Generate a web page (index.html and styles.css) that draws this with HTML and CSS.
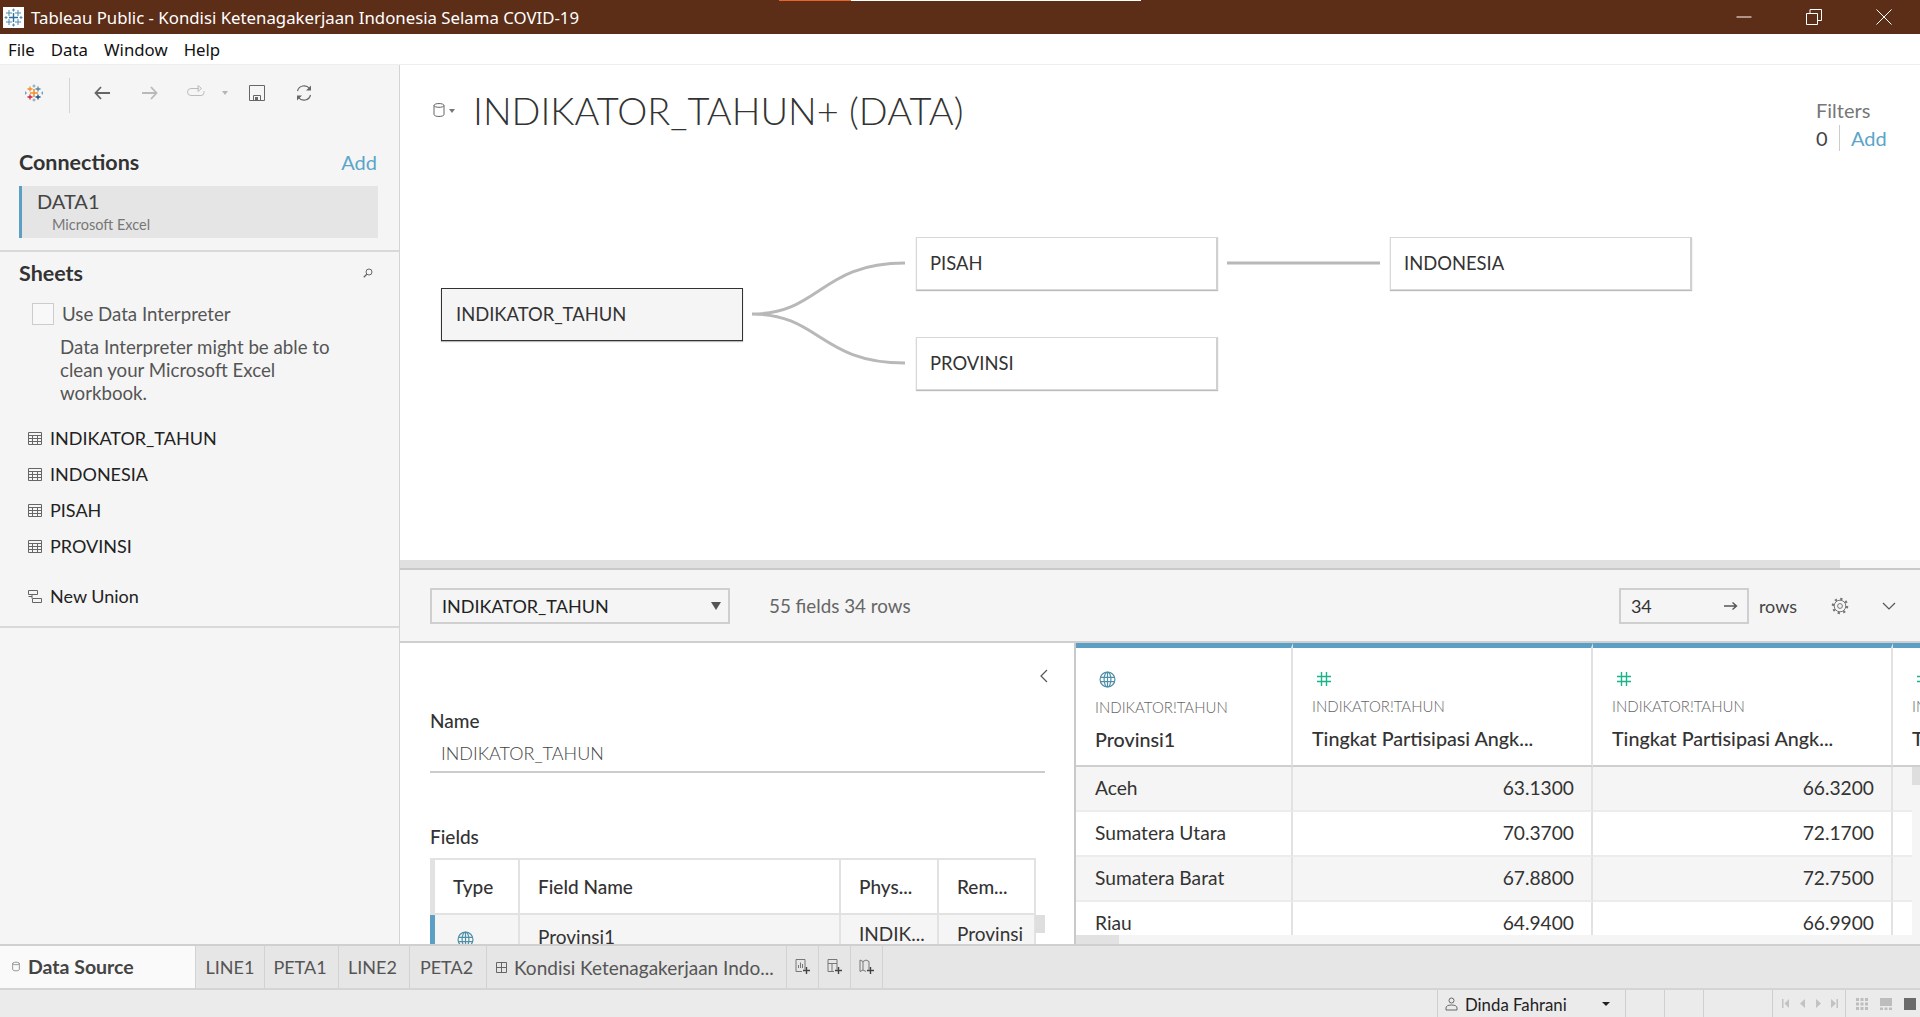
FILE: index.html
```html
<!DOCTYPE html>
<html lang="en">

<head>
    <meta charset="UTF-8">
    <meta name="viewport" content="width=device-width, initial-scale=1.0">
    <title>Tableau Public - Kondisi Ketenagakerjaan Indonesia Selama COVID-19</title>
    <link rel="stylesheet" href="styles.css">
</head>

<body>
    <svg class="defs" width="0" height="0">
        <symbol id="sheet-grid" viewBox="0 0 14 13">
            <path d="M.5.5h13v12H.5zM.5 3.5h13M.5 6.5h13M.5 9.5h13M4.5 3.5v9M9.5 3.5v9" fill="none" stroke="#666"/>
        </symbol>
        <symbol id="globe" viewBox="0 0 16 16">
            <g fill="none" stroke="#4f8fa8" stroke-width="1.1">
                <circle cx="8" cy="8" r="7"/>
                <ellipse cx="8" cy="8" rx="3.2" ry="7"/>
                <path d="M8 1v14M1.2 6h13.6M1.2 10h13.6"/>
            </g>
        </symbol>
        <symbol id="hash" viewBox="0 0 16 16">
            <path d="M5.5 1v14M10.5 1v14M1 5.5h14M1 10.5h14" fill="none" stroke="#1bb38a" stroke-width="1.4"/>
        </symbol>
        <symbol id="cylinder" viewBox="0 0 12 16">
            <path d="M1 3.5C1 .9 11 .9 11 3.5v9c0 2.6-10 2.6-10 0zM1 3.5c0 2.4 10 2.4 10 0" fill="none" stroke="#666"/>
        </symbol>
    </svg>

    <header class="titlebar">
        <svg class="app-icon" width="21" height="21" viewBox="0 0 21 21">
            <rect width="21" height="21" fill="#fff"/>
            <path d="M10.5 6v9M6 10.5h9" stroke="#2f6f9f" stroke-width="1.4" fill="none"/>
            <path d="M6 3v6M3 6h6M15 3v6M12 6h6M6 12v6M3 15h6M15 12v6M12 15h6M10.5 1.500v3M9 3h3M10.5 16.500v3M9 18h3M3 9v3M1.500 10.500h3M18 9v3M16.500 10.500h3" stroke="#4c8ab5" fill="none"/>
        </svg>
        <span class="app-title">Tableau Public - Kondisi Ketenagakerjaan Indonesia Selama COVID-19</span>
        <div class="win-buttons">
            <svg width="16" height="16" viewBox="0 0 16 16"><path d="M.5 8h15" stroke="#fff"/></svg>
            <svg width="16" height="16" viewBox="0 0 16 16"><path d="M.5 4.500h11v11H.5zM4 4.500V.5h11.500v11H11.500" fill="none" stroke="#fff"/></svg>
            <svg width="16" height="16" viewBox="0 0 16 16"><path d="M.5.5l15 15M15.500.5l-15 15" stroke="#fff"/></svg>
        </div>
        <div class="load-strip"><span class="load-orange"></span><span class="load-white"></span></div>
    </header>

    <nav class="menubar">
        <span>File</span>
        <span>Data</span>
        <span>Window</span>
        <span>Help</span>
    </nav>

    <div class="workspace">
        <aside class="sidebar">
            <div class="toolbar">
                <svg class="tb-logo" width="18" height="18" viewBox="0 0 18 18" fill="none" stroke-width="1.3">
                    <path d="M9 5v8M5 9h8" stroke="#f28e2b" stroke-width="1.6"/>
                    <path d="M5 2.500v5M2.500 5h5" stroke="#f28e2b"/>
                    <path d="M13 2.500v5M10.500 5h5" stroke="#5b879c"/>
                    <path d="M5 10.500v5M2.500 13h5" stroke="#d1203c"/>
                    <path d="M13 10.500v5M10.500 13h5" stroke="#1f4a80"/>
                    <path d="M9 .5v3M7.500 2h3M9 14.500v3M7.500 16h3M.5 7.500v3M-1 9h3M17.500 7.500v3M16 9h3" stroke="#7b9fb3" stroke-width="1"/>
                </svg>
                <span class="tb-sep"></span>
                <svg class="tb-back" width="16" height="14" viewBox="0 0 16 14"><path d="M7 1L1.500 7 7 13M1.500 7H16" fill="none" stroke="#666" stroke-width="1.8"/></svg>
                <svg class="tb-forward" width="16" height="14" viewBox="0 0 16 14"><path d="M9 1l5.500 6L9 13M14.500 7H0" fill="none" stroke="#b9b9b9" stroke-width="1.8"/></svg>
                <svg class="tb-redo" width="18" height="12" viewBox="0 0 18 12"><path d="M12 3.500H4a3 3 0 000 7h10a3 3 0 003-3V6M11 .5v6l3.500-3z" fill="none" stroke="#bcbcbc"/></svg>
                <span class="tb-caret"></span>
                <svg class="tb-save" width="16" height="16" viewBox="0 0 16 16"><path d="M.5.5h15v15H.5zM4.500 15.500v-5h7v5" fill="none" stroke="#666"/><rect x="6" y="12" width="3" height="3" fill="#666"/></svg>
                <svg class="tb-refresh" width="18" height="18" viewBox="0 0 18 18"><path d="M2.500 7a6.800 6.800 0 0112-2.500M15.500 11a6.800 6.800 0 01-12 2.500" fill="none" stroke="#666" stroke-width="1.2"/><path d="M16 1.500v5h-5zM2 16.500v-5h5z" fill="#666"/></svg>
            </div>

            <section class="connections">
                <div class="side-head">
                    <h2>Connections</h2>
                    <a class="link-add">Add</a>
                </div>
                <div class="conn-card">
                    <div class="conn-name">DATA1</div>
                    <div class="conn-type">Microsoft Excel</div>
                </div>
            </section>

            <section class="sheets">
                <div class="side-head">
                    <h2>Sheets</h2>
                    <svg class="search-icon" width="10" height="10" viewBox="0 0 10 10"><circle cx="6" cy="4" r="3" fill="none" stroke="#666"/><path d="M3.800 6.200L.8 9.200" stroke="#666" stroke-width="1.3"/></svg>
                </div>
                <label class="interp-check"><span class="checkbox"></span>Use Data Interpreter</label>
                <p class="interp-note">Data Interpreter might be able to clean your Microsoft Excel workbook.</p>
                <ul class="sheet-list">
                    <li><svg width="14" height="13"><use href="#sheet-grid"/></svg>INDIKATOR_TAHUN</li>
                    <li><svg width="14" height="13"><use href="#sheet-grid"/></svg>INDONESIA</li>
                    <li><svg width="14" height="13"><use href="#sheet-grid"/></svg>PISAH</li>
                    <li><svg width="14" height="13"><use href="#sheet-grid"/></svg>PROVINSI</li>
                </ul>
                <div class="new-union">
                    <svg width="14" height="13" viewBox="0 0 14 13"><path d="M.5.5h9v4h-9zM4.500 8.500h9v4h-9zM4 4.500v4M.5 6.500h3.500" fill="none" stroke="#666"/></svg>New Union
                </div>
            </section>
        </aside>

        <main class="main">
            <section class="canvas">
                <svg class="title-icon" width="12" height="16"><use href="#cylinder"/></svg>
                <span class="tb-caret title-caret"></span>
                <h1>INDIKATOR_TAHUN+ (DATA)</h1>
                <div class="filters">
                    <div class="filters-label">Filters</div>
                    <div class="filters-row"><span class="filters-count">0</span><a class="link-add">Add</a></div>
                </div>

                <svg class="links" width="1520" height="495" viewBox="400 65 1520 495">
                    <path d="M752 314C820 314 820 263 905 263M752 314C820 314 820 363 905 363M1227 263H1380" fill="none" stroke="#b8b8b8" stroke-width="3"/>
                </svg>
                <div class="node node-main">INDIKATOR_TAHUN</div>
                <div class="node node-pisah">PISAH</div>
                <div class="node node-provinsi">PROVINSI</div>
                <div class="node node-indonesia">INDONESIA</div>
            </section>

            <div class="canvas-scroll"><span class="canvas-thumb"></span></div>

            <section class="data-bar">
                <div class="select">INDIKATOR_TAHUN<span class="select-caret"></span></div>
                <span class="field-count">55 fields 34 rows</span>
                <div class="rows-box">
                    <span>34</span>
                    <svg width="14" height="10" viewBox="0 0 14 10"><path d="M0 5h12M8.500 1.500L12.500 5l-4 3.500" fill="none" stroke="#555" stroke-width="1.4"/></svg>
                </div>
                <span class="rows-label">rows</span>
                <svg class="gear" width="18" height="18" viewBox="0 0 18 18" fill="none" stroke="#777">
                    <circle cx="9" cy="9" r="5.800"/>
                    <circle cx="9" cy="9" r="7.200" stroke-width="2.2" stroke-dasharray="2.300 3.355"/>
                    <circle cx="9" cy="9" r="2.400"/>
                </svg>
                <svg class="chev-down" width="14" height="8" viewBox="0 0 14 8"><path d="M1 1l6 6 6-6" fill="none" stroke="#555" stroke-width="1.2"/></svg>
            </section>

            <section class="lower">
                <div class="meta">
                    <svg class="chev-left" width="8" height="14" viewBox="0 0 8 14"><path d="M7 1L1 7l6 6" fill="none" stroke="#555" stroke-width="1.2"/></svg>
                    <div class="meta-label name-label">Name</div>
                    <div class="name-value">INDIKATOR_TAHUN</div>
                    <div class="meta-label fields-label">Fields</div>
                    <div class="fields-table">
                        <div class="ft-cell ft-head">Type</div>
                        <div class="ft-cell ft-head">Field Name</div>
                        <div class="ft-cell ft-head">Phys...</div>
                        <div class="ft-cell ft-head">Rem...</div>
                        <div class="ft-cell ft-body ft-first"><svg width="17" height="17"><use href="#globe"/></svg></div>
                        <div class="ft-cell ft-body ft-low">Provinsi1</div>
                        <div class="ft-cell ft-body">INDIK...</div>
                        <div class="ft-cell ft-body">Provinsi</div>
                        <span class="ft-thumb"></span>
                    </div>
                </div>

                <div class="grid-pane">
                    <div class="data-grid">
                        <div class="gh"><svg width="17" height="17"><use href="#globe"/></svg><small>INDIKATOR!TAHUN</small><b>Provinsi1</b></div>
                        <div class="gh"><svg width="16" height="16"><use href="#hash"/></svg><small>INDIKATOR!TAHUN</small><b>Tingkat Partisipasi Angk...</b></div>
                        <div class="gh"><svg width="16" height="16"><use href="#hash"/></svg><small>INDIKATOR!TAHUN</small><b>Tingkat Partisipasi Angk...</b></div>
                        <div class="gh"><svg width="16" height="16"><use href="#hash"/></svg><small>INDIKATOR!TAHUN</small><b>Tingkat</b></div>

                        <div class="gc odd">Aceh</div><div class="gc odd num">63.1300</div><div class="gc odd num">66.3200</div><div class="gc odd"></div>
                        <div class="gc">Sumatera Utara</div><div class="gc num">70.3700</div><div class="gc num">72.1700</div><div class="gc"></div>
                        <div class="gc odd">Sumatera Barat</div><div class="gc odd num">67.8800</div><div class="gc odd num">72.7500</div><div class="gc odd"></div>
                        <div class="gc">Riau</div><div class="gc num">64.9400</div><div class="gc num">66.9900</div><div class="gc"></div>
                    </div>
                    <div class="v-scroll"><span></span></div>
                    <div class="h-scroll"><span></span></div>
                </div>
            </section>
        </main>
    </div>

    <div class="tabs">
        <div class="tab tab-source"><svg width="8" height="11"><use href="#cylinder"/></svg>Data Source</div>
        <div class="tab tab-line1">LINE1</div>
        <div class="tab tab-peta1">PETA1</div>
        <div class="tab tab-line2">LINE2</div>
        <div class="tab tab-peta2">PETA2</div>
        <div class="tab tab-dash">
            <svg width="11" height="11" viewBox="0 0 11 11"><path d="M.5.5h10v10H.5zM5.500.5v10M.5 5.500h10" fill="none" stroke="#666"/></svg>
            Kondisi Ketenagakerjaan Indo...
        </div>
        <div class="tab tab-new">
            <svg width="16" height="16" viewBox="0 0 16 16"><path d="M10 10.500V.5H1v12h6M3.500 9V6M5.500 9V3.500M7.500 9V5" fill="none" stroke="#777"/><path d="M11.500 8v7M8 11.500h7" stroke="#444" stroke-width="1.4"/></svg>
        </div>
        <div class="tab tab-new">
            <svg width="16" height="16" viewBox="0 0 16 16"><path d="M10 10.500V.5H1v12h6M1 4.500h9M5 4.500v8" fill="none" stroke="#777"/><path d="M11.500 8v7M8 11.500h7" stroke="#444" stroke-width="1.4"/></svg>
        </div>
        <div class="tab tab-new">
            <svg width="16" height="16" viewBox="0 0 16 16"><path d="M1 1l3 1.500L7 1l3 1.500v8M7 12.500L4 11 1 12.500V1M4 2.500V11" fill="none" stroke="#777"/><path d="M11.500 8v7M8 11.500h7" stroke="#444" stroke-width="1.4"/></svg>
        </div>
    </div>

    <footer class="statusbar">
        <div class="st st-user">
            <svg width="13" height="14" viewBox="0 0 13 14"><circle cx="6.500" cy="3.500" r="2.500" fill="none" stroke="#666"/><path d="M1 13v-2c0-2 2-3 5.500-3s5.500 1 5.500 3v2z" fill="none" stroke="#666"/></svg>
            <span>Dinda Fahrani</span>
            <span class="user-caret"></span>
        </div>
        <div class="st st-a"></div>
        <div class="st st-a"></div>
        <div class="st st-b"></div>
        <div class="st st-nav">
            <svg width="56" height="9" viewBox="0 0 56 9" fill="#c2c2c2"><path d="M0 0h1.500v9H0zM7 0v9L2.500 4.500zM23 0v9l-5-4.500zM34 0v9l5-4.500zM49 0v9l5-4.500zM54.500 0H56v9h-1.500z"/></svg>
        </div>
        <div class="st st-views">
            <svg width="12" height="12" viewBox="0 0 12 12" fill="#bdbdbd"><path d="M0 0h3v3H0zM4.500 0h3v3h-3zM9 0h3v3H9zM0 4.500h3v3H0zM4.500 4.500h3v3h-3zM9 4.500h3v3H9zM0 9h3v3H0zM4.500 9h3v3h-3zM9 9h3v3H9z"/></svg>
            <svg width="12" height="12" viewBox="0 0 12 12" fill="#bdbdbd"><path d="M0 0h12v8H0zM0 9.500h3V12H0zM4.500 9.500h3V12h-3zM9 9.500h3V12H9z"/></svg>
            <svg width="12" height="12" viewBox="0 0 12 12" fill="#6b6b6b"><path d="M0 0h12v12H0z"/></svg>
        </div>
    </footer>
</body>

</html>
```

FILE: styles.css
```css
* {
    box-sizing: border-box;
}

body {
    margin: 0;
    width: 1920px;
    height: 1017px;
    overflow: hidden;
    display: flex;
    flex-direction: column;
    font-family: "Lato", "Open Sans", sans-serif;
    font-size: 18px;
    color: #333333;
    background-color: #ffffff;
}

.defs {
    position: absolute;
}

/* window chrome */

.titlebar {
    position: relative;
    height: 34px;
    flex: none;
    display: flex;
    align-items: center;
    padding-left: 3px;
    background-color: #5c2d17;
    color: #ffffff;
}

.app-icon {
    flex: none;
}

.app-title {
    margin-left: 7px;
    font-family: "Noto Sans", sans-serif;
    font-size: 16.8px;
}

.win-buttons {
    margin-left: auto;
    display: flex;
    gap: 54px;
    padding-right: 28px;
}

.load-strip {
    position: absolute;
    top: 0;
    left: 779px;
    display: flex;
    height: 1px;
}

.load-orange {
    width: 72px;
    background-color: #e8622a;
}

.load-white {
    width: 290px;
    background-color: #ffffff;
}

.menubar {
    height: 31px;
    flex: none;
    display: flex;
    align-items: center;
    gap: 16px;
    padding-left: 8px;
    border-bottom: 1px solid #eeeeee;
    font-family: "Noto Sans", sans-serif;
    font-size: 16.8px;
    color: #111111;
}

.workspace {
    flex: 1;
    min-height: 0;
    display: grid;
    grid-template-columns: 400px 1fr;
    grid-template-rows: minmax(0, 1fr);
}

/* left column */

.sidebar {
    background-color: #f5f5f5;
    border-right: 1px solid #d4d4d4;
}

.toolbar {
    position: relative;
    height: 56px;
    display: flex;
    align-items: center;
}

.toolbar svg {
    position: absolute;
}

.tb-logo {
    left: 25px;
}

.tb-sep {
    position: absolute;
    left: 69px;
    top: 13px;
    width: 1px;
    height: 35px;
    background-color: #d4d4d4;
}

.tb-back {
    left: 94px;
}

.tb-forward {
    left: 142px;
}

.tb-redo {
    left: 187px;
    top: 20px;
}

.tb-caret {
    width: 0;
    height: 0;
    border-left: 3px solid transparent;
    border-right: 3px solid transparent;
    border-top: 4px solid #b5b5b5;
}

.toolbar .tb-caret {
    position: absolute;
    left: 222px;
}

.tb-save {
    left: 249px;
}

.tb-refresh {
    left: 295px;
}

.side-head {
    display: flex;
    justify-content: space-between;
    align-items: center;
    padding: 0 22px 0 19px;
}

.side-head h2 {
    margin: 0;
    font-size: 21.5px;
    line-height: 26px;
    font-weight: 700;
    color: #333333;
}

.link-add {
    color: #5ba5c9;
    font-size: 20px;
}

.connections {
    padding-top: 28px;
    height: 131px;
    border-bottom: 2px solid #d9d9d9;
}

.conn-card {
    margin: 11px 21px 0 19px;
    height: 52px;
    padding: 3px 0 0 15px;
    background-color: #e5e5e5;
    border-left: 3px solid #5ba0c4;
}

.conn-name {
    font-size: 20px;
    line-height: 24px;
    color: #444444;
}

.conn-type {
    padding: 2px 0 0 15px;
    font-size: 14.5px;
    line-height: 20px;
    color: #777777;
}

.sheets {
    padding-top: 8px;
    height: 376px;
    border-bottom: 2px solid #d9d9d9;
}

.search-icon {
    margin-right: 4px;
}

.interp-check {
    display: flex;
    align-items: center;
    margin: 17px 0 0 32px;
    font-size: 18.7px;
    color: #555555;
}

.checkbox {
    width: 22px;
    height: 22px;
    margin-right: 8px;
    border: 1px solid #cccccc;
    background-color: #f8f8f8;
}

.interp-note {
    margin: 11px 50px 0 60px;
    font-size: 18.7px;
    line-height: 23px;
    color: #555555;
}

.sheet-list {
    list-style: none;
    margin: 15px 0 0;
    padding: 0;
}

.sheet-list li {
    display: flex;
    align-items: center;
    height: 36px;
    padding-left: 28px;
    color: #222222;
}

.sheet-list svg,
.new-union svg {
    margin-right: 8px;
}

.new-union {
    display: flex;
    align-items: center;
    margin-top: 14px;
    height: 36px;
    padding-left: 28px;
    color: #222222;
}

/* right column */

.main {
    min-width: 0;
    display: flex;
    flex-direction: column;
}

.canvas {
    position: relative;
    height: 495px;
    flex: none;
    background-color: #ffffff;
}

.title-icon {
    position: absolute;
    left: 33px;
    top: 37px;
}

.title-caret {
    position: absolute;
    left: 49px;
    top: 44px;
    border-top-color: #777777;
}

.canvas h1 {
    position: absolute;
    left: 73px;
    top: 21px;
    margin: 0;
    font-size: 38px;
    line-height: 48px;
    font-weight: 300;
    color: #333333;
}

.filters {
    position: absolute;
    left: 1416px;
    top: 33px;
}

.filters-label {
    font-size: 20px;
    line-height: 24px;
    color: #777777;
}

.filters-row {
    display: flex;
    align-items: center;
    margin-top: 3px;
}

.filters-count {
    width: 24px;
    margin-right: 11px;
    border-right: 1px solid #cccccc;
    font-size: 20px;
    line-height: 26px;
    color: #444444;
}

.links {
    position: absolute;
    left: 0;
    top: 0;
}

.node {
    position: absolute;
    width: 302px;
    height: 53px;
    display: flex;
    align-items: center;
    padding: 0 0 1px 13px;
    background-color: #ffffff;
    border: 1px solid #d8d8d8;
    border-right: 2px solid #d0d0d0;
    box-shadow: 0 1px 1px #bbbbbb;
    font-size: 18.4px;
    color: #333333;
}

.node-main {
    left: 41px;
    top: 223px;
    padding-left: 14px;
    background-color: #f5f5f5;
    border: 1px solid #333333;
}

.node-pisah {
    left: 516px;
    top: 172px;
}

.node-provinsi {
    left: 516px;
    top: 272px;
}

.node-indonesia {
    left: 990px;
    top: 172px;
}

.canvas-scroll {
    height: 10px;
    flex: none;
    background-color: #f7f7f7;
    border-bottom: 2px solid #c9c9c9;
}

.canvas-thumb {
    display: block;
    width: 1440px;
    height: 8px;
    background-color: #e0e0e0;
}

.data-bar {
    position: relative;
    height: 73px;
    flex: none;
    display: flex;
    align-items: center;
    padding-left: 30px;
    background-color: #f5f5f5;
    border-bottom: 2px solid #cfcfcf;
}

.select {
    position: relative;
    width: 300px;
    height: 36px;
    padding-left: 10px;
    line-height: 32px;
    border: 2px solid #cfcfcf;
    color: #222222;
}

.select-caret {
    position: absolute;
    right: 7px;
    top: 12px;
    width: 0;
    height: 0;
    border-left: 5px solid transparent;
    border-right: 5px solid transparent;
    border-top: 8px solid #555555;
}

.field-count {
    margin-left: 39px;
    font-size: 18.8px;
    color: #666666;
}

.rows-box {
    display: flex;
    align-items: center;
    justify-content: space-between;
    margin-left: auto;
    width: 130px;
    height: 36px;
    padding: 0 9px 0 10px;
    border: 2px solid #cfcfcf;
    color: #333333;
}

.rows-label {
    margin-left: 10px;
    color: #444444;
}

.gear {
    margin-left: 34px;
}

.chev-down {
    margin: 0 24px 0 33px;
}

.lower {
    flex: 1;
    min-height: 0;
    display: flex;
    overflow: hidden;
}

.meta {
    position: relative;
    width: 676px;
    flex: none;
    padding: 0 30px;
    background-color: #ffffff;
    border-right: 2px solid #c9c9c9;
}

.chev-left {
    position: absolute;
    left: 640px;
    top: 26px;
}

.meta-label {
    font-size: 19px;
    line-height: 24px;
    font-weight: 500;
    color: #333333;
}

.name-label {
    margin-top: 66px;
}

.name-value {
    width: 615px;
    height: 39px;
    margin-top: 1px;
    padding: 7px 0 0 11px;
    line-height: 24px;
    border-bottom: 2px solid #cccccc;
    font-weight: 300;
    color: #444444;
}

.fields-label {
    margin-top: 52px;
}

.fields-table {
    position: relative;
    width: 606px;
    margin-top: 9px;
    display: grid;
    grid-template-columns: 85px 321px 98px 97px;
    grid-template-rows: 55px 40px;
    border-top: 2px solid #e2e2e2;
    border-left: 5px solid #e2e2e2;
}

.ft-cell {
    padding: 0 18px;
    display: flex;
    align-items: center;
    border-right: 2px solid #e2e2e2;
    border-bottom: 2px solid #e2e2e2;
    font-size: 19px;
    color: #333333;
}

.ft-head {
    font-weight: 500;
}

.ft-body {
    padding-bottom: 4px;
    background-color: #f5f5f5;
    border-bottom: 0;
}

.ft-first {
    padding-left: 22px;
    padding-bottom: 0;
    padding-top: 8px;
    box-shadow: -5px 0 0 #5ba0c4;
}

.ft-low {
    padding-bottom: 0;
    padding-top: 3px;
}

.ft-thumb {
    position: absolute;
    left: 600px;
    top: 55px;
    width: 10px;
    height: 18px;
    background-color: #dedede;
}

.grid-pane {
    position: relative;
    flex: 1;
    min-width: 0;
    overflow: hidden;
    background-color: #ffffff;
}

.data-grid {
    display: grid;
    grid-template-columns: 217px 300px 300px 300px;
    grid-template-rows: 124px 45px 45px 45px 45px;
    font-size: 19.2px;
}

.gh {
    display: flex;
    flex-direction: column;
    align-items: flex-start;
    padding: 23px 0 0 19px;
    border-top: 5px solid #5ba0c4;
    border-right: 2px solid #e2e2e2;
    border-bottom: 2px solid #cfcfcf;
    white-space: nowrap;
}

.gh svg {
    margin-bottom: 10px;
    margin-left: 4px;
}

.gh small {
    font-size: 15px;
    line-height: 18px;
    font-weight: 300;
    color: #666666;
}

.gh b {
    margin-top: 12px;
    font-size: 19.7px;
    line-height: 24px;
    font-weight: 500;
    color: #333333;
}

.gc {
    padding: 0 17px 2px 19px;
    display: flex;
    align-items: center;
    border-right: 2px solid #e2e2e2;
    border-bottom: 2px solid #ececec;
    color: #333333;
    white-space: nowrap;
}

.gc.odd {
    background-color: #f5f5f5;
}

.gc.num {
    justify-content: flex-end;
}

.v-scroll {
    position: absolute;
    right: 0;
    top: 124px;
    bottom: 0;
    width: 8px;
    background-color: #f5f5f5;
}

.v-scroll span {
    display: block;
    height: 18px;
    background-color: #dedede;
}

.h-scroll {
    position: absolute;
    left: 0;
    right: 0;
    bottom: 0;
    height: 9px;
    background-color: #f5f5f5;
}

.h-scroll span {
    display: block;
    width: 43px;
    height: 9px;
    background-color: #e2e2e2;
}

/* bottom bars */

.tabs {
    height: 46px;
    flex: none;
    display: flex;
    background-color: #e6e6e6;
    border-top: 2px solid #d0d0d0;
    border-bottom: 2px solid #d4d4d4;
    color: #555555;
}

.tab {
    display: flex;
    align-items: center;
    justify-content: center;
    border-right: 1px solid #d2d2d2;
    white-space: nowrap;
}

.tab-source {
    width: 196px;
    justify-content: flex-start;
    gap: 8px;
    padding: 0 0 2px 12px;
    background-color: #fafafa;
    font-size: 19.5px;
    font-weight: 700;
    color: #444444;
}

.tab-line1 {
    width: 69px;
}

.tab-peta1 {
    width: 74px;
    padding-right: 3px;
}

.tab-line2 {
    width: 71px;
    padding-right: 3px;
}

.tab-peta2 {
    width: 77px;
    padding-right: 3px;
}

.tab-dash {
    width: 300px;
    justify-content: flex-start;
    gap: 7px;
    padding-left: 9px;
    font-size: 19px;
}

.tab-new {
    width: 32px;
}

.statusbar {
    height: 27px;
    flex: none;
    display: flex;
    justify-content: flex-end;
    background-color: #ebebeb;
}

.st {
    display: flex;
    align-items: center;
    border-left: 1px solid #cfcfcf;
}

.st-user {
    position: relative;
    width: 188px;
    padding: 1px 0 0 7px;
    font-size: 16.8px;
    color: #222222;
}

.st-user span:first-of-type {
    margin-left: 7px;
}

.user-caret {
    position: absolute;
    left: 164px;
    top: 12px;
    width: 0;
    height: 0;
    border-left: 4px solid transparent;
    border-right: 4px solid transparent;
    border-top: 4px solid #222222;
}

.st-a {
    width: 39px;
}

.st-b {
    width: 69px;
}

.st-nav {
    width: 73px;
    padding-left: 9px;
}

.st-views {
    width: 75px;
    gap: 12px;
    padding-left: 10px;
}
```
